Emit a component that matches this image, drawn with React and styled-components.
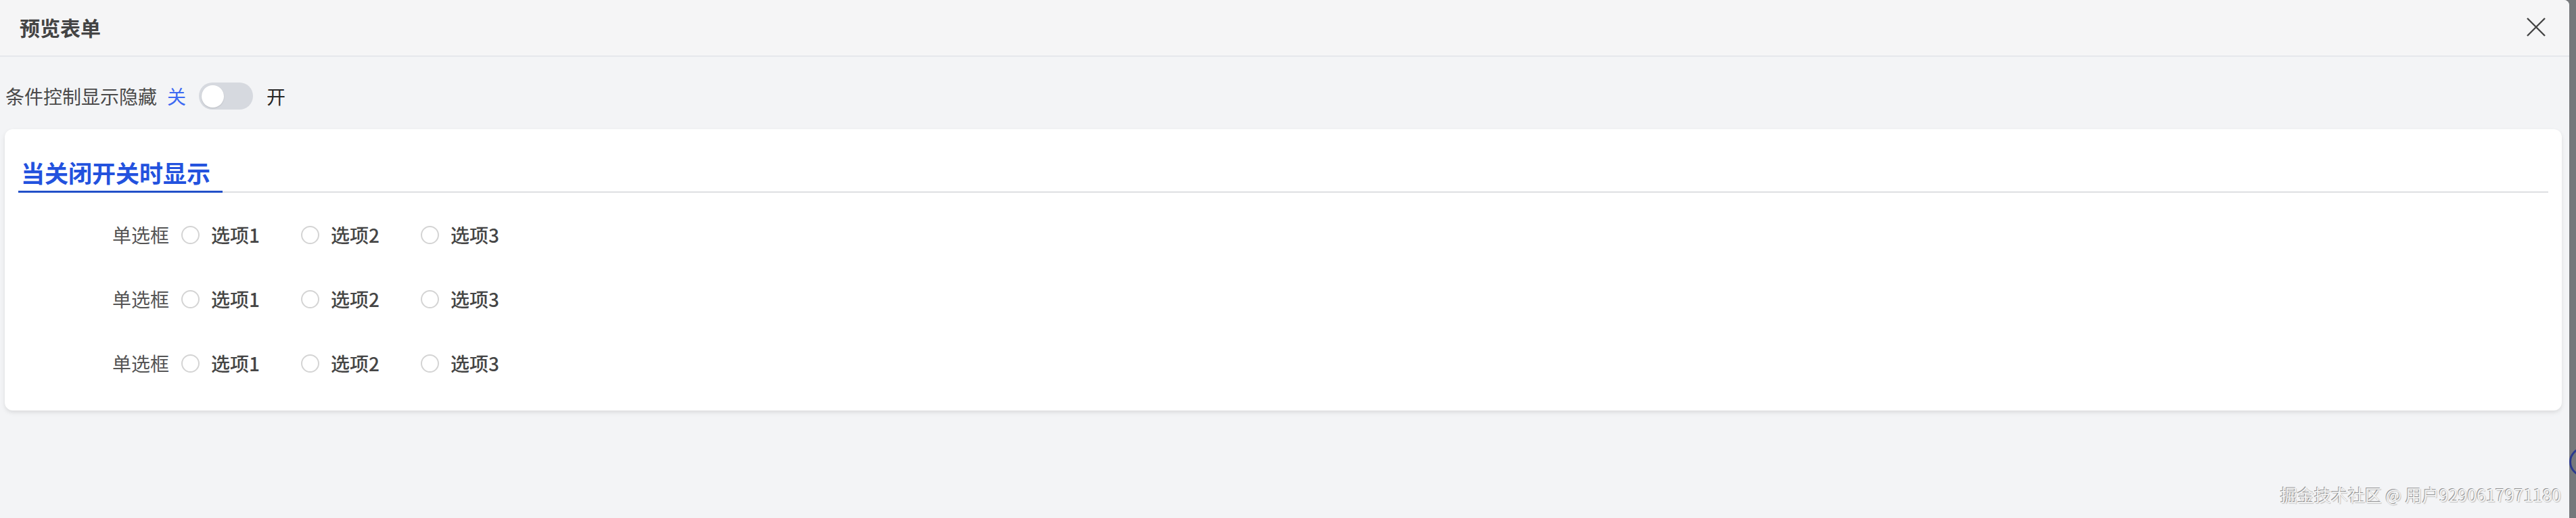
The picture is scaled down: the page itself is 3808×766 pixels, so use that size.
import React from "react";
import styled, { createGlobalStyle } from "styled-components";

const Global = createGlobalStyle`
  html, body { margin: 0; padding: 0; overflow: hidden; }
  body { font-family: "Noto Sans CJK SC", "Noto Sans", sans-serif; }
  * { box-sizing: border-box; }
`;

const Screen = styled.div`
  display: flex;
  width: 3808px;
  height: 766px;
  background: #76787b;
  position: relative;
  overflow: hidden;
`;

const Dialog = styled.div`
  flex: 1;
  display: flex;
  flex-direction: column;
  background: #f3f4f6;
  border-top-right-radius: 8px;
  position: relative;
`;

const Header = styled.header`
  height: 84px;
  display: flex;
  align-items: center;
  justify-content: space-between;
  padding: 0 34px 2px 29px;
  background: #f5f5f6;
  border-bottom: 2px solid #e5e7eb;
  border-top-right-radius: 8px;
`;

const Title = styled.h1`
  margin: 0;
  font-size: 30px;
  font-weight: 700;
  color: #444;
  line-height: 40px;
`;

const CloseButton = styled.button`
  width: 30px;
  height: 30px;
  padding: 0;
  border: 0;
  background: transparent;
  display: flex;
  align-items: center;
  justify-content: center;
  margin-top: -1px;
`;

const Body = styled.div`
  flex: 1;
  padding: 38px 11px 0 7px;
  display: flex;
  flex-direction: column;
`;

const SwitchRow = styled.div`
  display: flex;
  align-items: center;
  height: 40px;
  font-size: 28px;
  line-height: 40px;
`;

const SwitchLabel = styled.span`
  color: #4a4a4a;
  margin-left: 1px;
  margin-right: 15px;
`;

const StateText = styled.span`
  color: ${(p) => (p.$active ? "#3d6af2" : "#262626")};
`;

const Track = styled.span`
  display: inline-flex;
  align-items: center;
  width: 80px;
  height: 40px;
  border-radius: 20px;
  background: #d6d9df;
  padding: 0 4px;
  margin: 0 20px 0 19px;
`;

const Knob = styled.span`
  width: 33px;
  height: 33px;
  border-radius: 50%;
  background: #fff;
  box-shadow: 0 1px 2px rgba(0, 0, 0, 0.12);
`;

const Card = styled.section`
  margin-top: 29px;
  background: #fff;
  border-radius: 12px;
  box-shadow: 0 3px 6px rgba(0, 0, 0, 0.1);
  padding: 41px 20px 50px 20px;
  display: flex;
  flex-direction: column;
`;

const CardHead = styled.div`
  border-bottom: 2px solid #dedfe2;
  display: flex;
`;

const CardTitle = styled.h2`
  margin: 0 0 -2px 0;
  padding: 0 18px 4px 4px;
  font-size: 35px;
  font-weight: 700;
  line-height: 46px;
  color: #2352de;
  border-bottom: 3px solid #2250c8;
`;

const Rows = styled.div`
  margin-top: 42px;
  display: flex;
  flex-direction: column;
  gap: 55px;
`;

const FormRow = styled.div`
  display: flex;
  align-items: center;
  height: 40px;
  font-size: 28px;
`;

const RowLabel = styled.span`
  width: 223px;
  text-align: right;
  color: #555;
  margin-right: 18px;
`;

const Option = styled.label`
  display: flex;
  align-items: center;
  width: 177px;
  color: #454545;
  font-weight: 500;
`;

const RadioDot = styled.span`
  width: 27px;
  height: 27px;
  border-radius: 50%;
  border: 2px solid #d4d4d4;
  background: #fff;
  margin-right: 17px;
`;

const Watermark = styled.div`
  position: absolute;
  right: 12px;
  bottom: 20px;
  font-size: 25px;
  line-height: 30px;
  color: #f4f4f4;
  text-shadow: -1px -1px 0 rgba(60, 60, 60, 0.55), 1px 1px 1px rgba(120, 120, 120, 0.4);
  white-space: pre;
`;

const Strip = styled.div`
  width: 10px;
  background: #76787b;
`;

const Ring = styled.span`
  position: absolute;
  left: 3798px;
  top: 661px;
  width: 44px;
  height: 44px;
  border-radius: 50%;
  border: 3px solid #2c3a8f;
`;

const options = ["选项1", "选项2", "选项3"];

export default function App() {
  return (
    <>
      <Global />
      <Screen>
        <Dialog>
          <Header>
            <Title>预览表单</Title>
            <CloseButton aria-label="close">
              <svg width="30" height="30" viewBox="0 0 30 30">
                <path d="M2 2 L28 28 M28 2 L2 28" stroke="#444" strokeWidth="2.4" fill="none" />
              </svg>
            </CloseButton>
          </Header>
          <Body>
            <SwitchRow>
              <SwitchLabel>条件控制显示隐藏</SwitchLabel>
              <StateText $active>关</StateText>
              <Track>
                <Knob />
              </Track>
              <StateText>开</StateText>
            </SwitchRow>
            <Card>
              <CardHead>
                <CardTitle>当关闭开关时显示</CardTitle>
              </CardHead>
              <Rows>
                {[0, 1, 2].map((r) => (
                  <FormRow key={r}>
                    <RowLabel>单选框</RowLabel>
                    {options.map((o) => (
                      <Option key={o}>
                        <RadioDot />
                        {o}
                      </Option>
                    ))}
                  </FormRow>
                ))}
              </Rows>
            </Card>
          </Body>
          <Watermark>掘金技术社区 @ 用户9290617971180</Watermark>
        </Dialog>
        <Strip />
        <Ring />
      </Screen>
    </>
  );
}
